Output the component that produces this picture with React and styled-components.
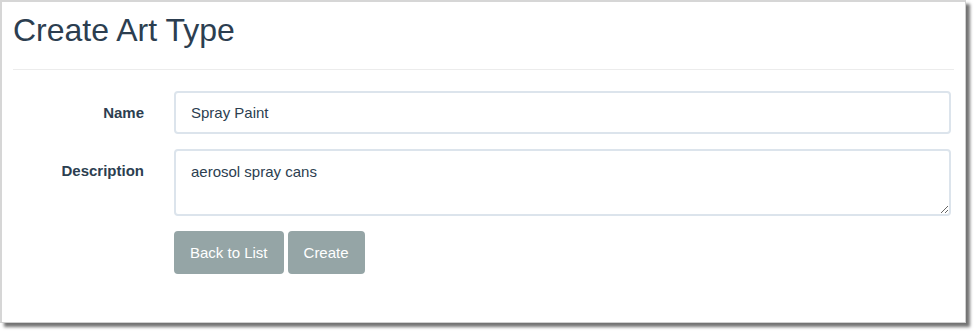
import React from "react";
import styled, { createGlobalStyle } from "styled-components";

const Global = createGlobalStyle`
  html, body { margin: 0; padding: 0; background: #ffffff; }
  body { min-height: 334px; font-family: "Liberation Sans", Arial, Helvetica, sans-serif; color: #2c3e50; }
  * { box-sizing: border-box; }
`;

const Frame = styled.div`
  width: 966px;
  height: 323px;
  background: #ffffff;
  border-top: 2px solid #d6d6d6;
  border-left: 2px solid #d6d6d6;
  border-right: 1px solid #cfcfcf;
  border-bottom: 1px solid #cfcfcf;
  box-shadow: 4px 4px 3px rgba(0, 0, 0, 0.55);
  padding: 11px 11px 0 11px;
`;

const Title = styled.h2`
  margin: 0;
  font-size: 32px;
  font-weight: 400;
  line-height: 1.1;
  color: #2c3e50;
`;

const Rule = styled.hr`
  margin: 21px 0 21px 0;
  border: 0;
  border-top: 1px solid #ececec;
  height: 0;
`;

const Form = styled.form`
  width: 938px;
  display: grid;
  grid-template-columns: 131px 1fr;
  column-gap: 30px;
  row-gap: 15px;
`;

const Label = styled.label`
  text-align: right;
  font-weight: 700;
  font-size: 15px;
  line-height: 21.4px;
  padding-top: 11px;
  color: #2c3e50;
`;

const fieldBase = `
  width: 100%;
  font-family: "Liberation Sans", Arial, Helvetica, sans-serif;
  font-size: 15px;
  color: #2c3e50;
  background: #ffffff;
  border: 2px solid #dce4ec;
  border-radius: 4px;
  padding: 10px 15px;
  outline: none;
`;

const Input = styled.input`
  ${fieldBase}
  height: 43px;
  line-height: 21px;
`;

const TextArea = styled.textarea`
  ${fieldBase}
  height: 67px;
  line-height: 21.4px;
  resize: vertical;
  display: block;
`;

const Actions = styled.div`
  grid-column: 2;
  display: flex;
  gap: 4px;
`;

const Button = styled.button`
  height: 43px;
  display: inline-flex;
  align-items: center;
  padding: 0 14px;
  font-family: "Liberation Sans", Arial, Helvetica, sans-serif;
  font-size: 15px;
  color: #ffffff;
  background: #95a5a6;
  border: 2px solid #95a5a6;
  border-radius: 4px;
  cursor: pointer;
`;

export default function App() {
  return (
    <>
      <Global />
      <Frame>
        <Title>Create Art Type</Title>
        <Rule />
        <Form onSubmit={(e) => e.preventDefault()}>
          <Label htmlFor="name">Name</Label>
          <Input id="name" defaultValue="Spray Paint" />
          <Label htmlFor="desc">Description</Label>
          <TextArea id="desc" defaultValue="aerosol spray cans" />
          <Actions>
            <Button type="button">Back to List</Button>
            <Button type="submit">Create</Button>
          </Actions>
        </Form>
      </Frame>
    </>
  );
}
